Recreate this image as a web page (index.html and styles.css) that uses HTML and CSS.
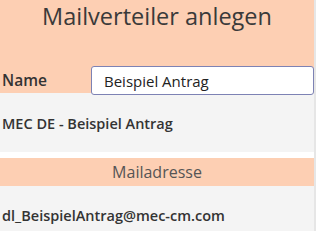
FILE: index.html
```html
<!DOCTYPE html>
<html lang="de">
<head>
<meta charset="utf-8">
<title>Mailverteiler anlegen</title>
<link rel="stylesheet" href="styles.css">
</head>
<body>
<div class="panel">
  <div class="head">
    <h1 class="title">Mailverteiler anlegen</h1>
    <div class="name-row">
      <label class="name-label" for="name">Name</label>
      <input class="name-input" id="name" type="text" value="Beispiel Antrag">
    </div>
  </div>
  <div class="block">
    <div class="strong-text">MEC DE - Beispiel Antrag</div>
  </div>
  <div class="spacer"></div>
  <div class="subhead">Mailadresse</div>
  <div class="block block-last">
    <div class="strong-text">dl_BeispielAntrag@mec-cm.com</div>
  </div>
</div>
</body>
</html>
```
FILE: styles.css
```css
html, body {
  margin: 0;
  padding: 0;
  background: #ffffff;
}
body {
  width: 318px;
  height: 231px;
  overflow: hidden;
  font-family: "Open Sans", "Noto Sans", sans-serif;
  color: #333333;
}
.panel {
  width: 314px;
  height: 231px;
  border-right: 2px solid #e6e6e6;
  display: flex;
  flex-direction: column;
  background: #f4f4f4;
}
.head {
  background: #fdcfb3;
  height: 93px;
  display: flex;
  flex-direction: column;
}
.title {
  margin: 0;
  height: 66px;
  font-size: 23.5px;
  font-weight: 400;
  line-height: 33px;
  text-align: center;
  color: #3a3a3a;
}
.name-row {
  height: 27px;
  display: flex;
  align-items: flex-start;
  position: relative;
  z-index: 1;
}
.name-label {
  width: 91px;
  padding-left: 2px;
  box-sizing: border-box;
  font-size: 15.5px;
  font-weight: 600;
  line-height: 29px;
  color: #333333;
}
.name-input {
  flex: 1;
  height: 29px;
  margin: 0;
  box-sizing: border-box;
  border: 1px solid #7d82b4;
  border-radius: 3px;
  background: #ffffff;
  padding: 0 0 0 12px;
  font-family: inherit;
  font-size: 15px;
  color: #222222;
  outline: none;
}
.block {
  height: 59px;
  padding-left: 2px;
  padding-top: 21px;
  box-sizing: border-box;
}
.block-last {
  flex: 1;
  height: auto;
  padding-top: 20px;
}
.strong-text {
  font-size: 14.5px;
  font-weight: 600;
  line-height: 20px;
  color: #333333;
}
.spacer {
  height: 6px;
  background: #ffffff;
}
.subhead {
  height: 28px;
  background: #fdcfb3;
  text-align: center;
  font-size: 16px;
  line-height: 28px;
  color: #555555;
}
```
